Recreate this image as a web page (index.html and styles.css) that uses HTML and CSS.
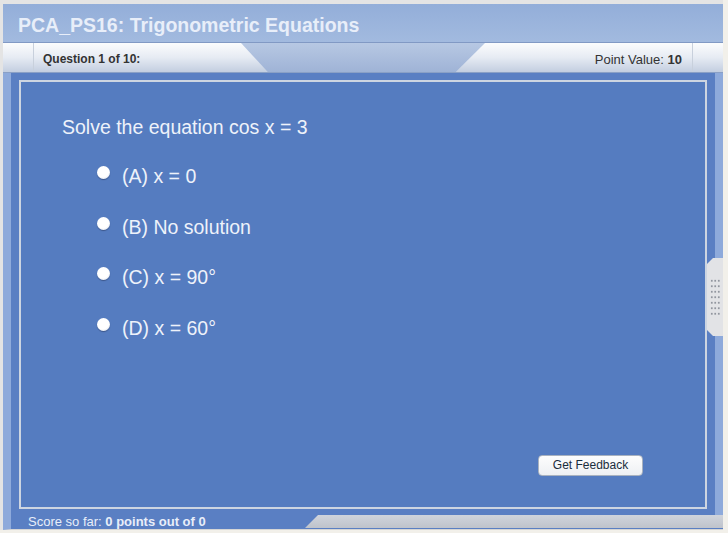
FILE: index.html
```html
<!DOCTYPE html>
<html>

	<head>
		<meta charset="UTF-8">
		<title>PCA_PS16: Trigonometric Equations</title>
		<link rel="stylesheet" href="styles.css">
	</head>

	<body>
		<div class="screen">
			<div class="player">
				<div class="title">PCA_PS16: Trigonometric Equations</div>
				<div class="tabs">
					<div class="cap"></div>
					<div class="qtab">Question 1 of 10:</div>
					<div class="ptab">Point Value: <b>10</b></div>
					<div class="cap cap-r"></div>
				</div>
				<div class="stage">
					<div class="main">
						<div class="panel">
							<p class="question">Solve the equation cos x = 3</p>
							<ul class="options">
								<li><span class="radio"></span>(A) x = 0</li>
								<li><span class="radio"></span>(B) No solution</li>
								<li><span class="radio"></span>(C) x = 90&deg;</li>
								<li><span class="radio"></span>(D) x = 60&deg;</li>
							</ul>
							<a href="javascript:;" class="btn">Get Feedback</a>
						</div>
					</div>
					<div class="footer">
						<div class="score">Score so far: <b>0 points out of 0</b></div>
						<div class="bar"></div>
					</div>
					<div class="handle">
						<span></span>
					</div>
				</div>
			</div>
		</div>
	</body>

</html>
```

FILE: styles.css
```css
* {
	margin: 0;
	padding: 0;
	box-sizing: border-box;
}

body {
	font-family: "Liberation Sans", Arial, sans-serif;
	background: #f2f0ea;
	color: #333;
}

ul {
	list-style: none;
}

a {
	cursor: pointer;
	outline: none;
	text-decoration: none;
}

.screen {
	width: 723px;
	padding: 4px 0 0 3px;
	background: #e4e4e4;
}

.player {
	width: 720px;
	background: #fff;
}

.title {
	height: 39px;
	padding: 1px 0 0 15px;
	line-height: 40px;
	font-size: 19.5px;
	font-weight: bold;
	color: #e8eef9;
	background: linear-gradient(#93aed9, #a2badf);
	border-bottom: 1px solid #8199c4;
}

.tabs {
	height: 30px;
	display: flex;
	position: relative;
	background: linear-gradient(#fbfcfd, #e6ebf3 50%, #c3cee0);
	border-bottom: 1px solid #8aa0c6;
	font-size: 12px;
	line-height: 29px;
}

/* blue trapezoid between the two tabs */
.tabs::before {
	content: "";
	position: absolute;
	left: 238px;
	top: 0;
	width: 244px;
	height: 29px;
	background: linear-gradient(#b7c8e3, #9fb3d6);
	clip-path: polygon(0 0, 100% 0, 88% 100%, 11% 100%);
}

.cap {
	width: 31px;
	border-right: 1px solid #c8d0dc;
}

.cap-r {
	border-right: 0;
	border-left: 1px solid #c8d0dc;
}

.qtab {
	flex: 1;
	padding: 2px 0 0 9px;
	font-weight: bold;
	position: relative;
}

.ptab {
	flex: 1;
	text-align: right;
	padding: 2px 10px 0 0;
	font-size: 13px;
	position: relative;
}

.stage {
	position: relative;
	background: #5a7fc3;
	border-left: 8px solid #8eaadb;
	border-bottom: 1px solid #d6d6d6;
}

.main {
	padding: 7px 8px 6px 8px;
	border-right: 8px solid #8eaadb;
}

.panel {
	height: 429px;
	display: flex;
	flex-direction: column;
	padding: 34px 0 0 41px;
	background: #557cc0;
	border: 2px solid #cdd5e1;
	color: #eef2fa;
	font-size: 19.5px;
}

.options {
	margin-top: 26px;
	padding-left: 35px;
	display: flex;
	flex-direction: column;
	gap: 27.6px;
}

.options li {
	display: flex;
	align-items: flex-start;
	gap: 12px;
}

.radio {
	width: 13px;
	height: 13px;
	margin-top: 1px;
	border-radius: 50%;
	background: radial-gradient(circle at 45% 40%, #fff 55%, #cfd3da 100%);
	box-shadow: 0 1px 1px rgba(30, 40, 70, 0.45);
}

.btn {
	margin: auto 62px 31px auto;
	width: 105px;
	height: 21px;
	line-height: 19px;
	text-align: center;
	font-size: 12px;
	color: #1a2d3c;
	background: linear-gradient(#fdfdfd, #eef0f3);
	border: 1px solid #a9b2bf;
	border-radius: 4px;
}

.footer {
	height: 14px;
	display: flex;
	align-items: flex-end;
	font-size: 13px;
	line-height: 14px;
	color: #e8eef9;
}

.score {
	padding-left: 17px;
	white-space: nowrap;
}

.bar {
	margin-left: auto;
	width: 418px;
	height: 13px;
	margin-bottom: 1px;
	background: linear-gradient(#d0d4dc, #bfc3cb);
	clip-path: polygon(13px 0, 100% 0, 100% 100%, 0 100%);
}

.handle {
	position: absolute;
	right: 0;
	top: 185px;
	width: 16px;
	height: 78px;
	background: #e2e3e6;
	clip-path: polygon(6px 0, 100% 0, 100% 100%, 6px 100%, 0 72px, 0 6px);
}

.handle span {
	position: absolute;
	left: 3px;
	top: 20px;
	width: 10px;
	height: 38px;
	background: radial-gradient(circle, #8a8f98 0.6px, transparent 1px) 0 0 / 3.5px 5.5px;
}
```
